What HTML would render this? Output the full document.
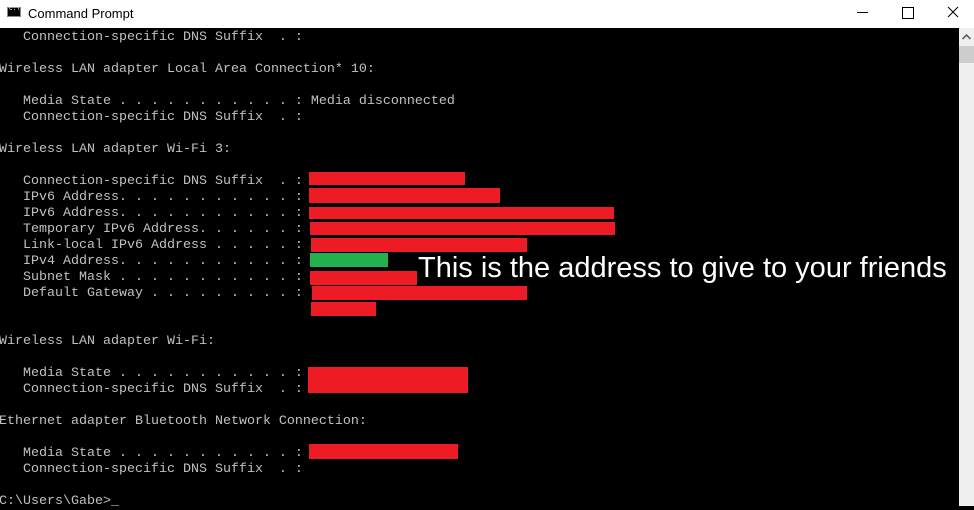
<!DOCTYPE html>
<html><head><style>
body{margin:0;width:974px;height:506px;overflow:hidden;background:#000;position:relative}
.title{position:absolute;left:0;top:0;width:974px;height:28px;background:#fff;font-family:"Liberation Sans",sans-serif;font-size:13px;color:#000}
.con{position:absolute;left:-1px;top:30px;font-family:"Liberation Mono",monospace;font-size:13.33px;line-height:16px;color:#c0c0c0;white-space:pre;margin:0}
.r{position:absolute;background:#ed1c24}
.sb{position:absolute;left:959px;top:28px;width:15px;height:478px;background:#f0f0f0}
</style></head><body>
<div class="title">
<div style="position:absolute;left:7px;top:7px;width:14px;height:10px;background:#000;border:1px solid #888;box-sizing:border-box"><span style="position:absolute;left:1px;top:-3px;font-size:6px;color:#fff;font-family:'Liberation Mono',monospace">c:\</span></div>
<div style="position:absolute;left:28px;top:6px">Command Prompt</div>
<div style="position:absolute;left:857px;top:12px;width:11px;height:1px;background:#000"></div>
<div style="position:absolute;left:902px;top:7px;width:10px;height:10px;border:1px solid #000"></div>
<svg style="position:absolute;left:947px;top:6px" width="12" height="12"><path d="M1 1L11 11M11 1L1 11" stroke="#000" stroke-width="1"/></svg>
</div>
<pre class="con">   Connection-specific DNS Suffix  . :

Wireless LAN adapter Local Area Connection* 10:

   Media State . . . . . . . . . . . : Media disconnected
   Connection-specific DNS Suffix  . :

Wireless LAN adapter Wi-Fi 3:

   Connection-specific DNS Suffix  . :
   IPv6 Address. . . . . . . . . . . :
   IPv6 Address. . . . . . . . . . . :
   Temporary IPv6 Address. . . . . . :
   Link-local IPv6 Address . . . . . :
   IPv4 Address. . . . . . . . . . . :
   Subnet Mask . . . . . . . . . . . :
   Default Gateway . . . . . . . . . :


Wireless LAN adapter Wi-Fi:

   Media State . . . . . . . . . . . :
   Connection-specific DNS Suffix  . :

Ethernet adapter Bluetooth Network Connection:

   Media State . . . . . . . . . . . :
   Connection-specific DNS Suffix  . :

C:\Users\Gabe>_</pre>
<div class="r" style="left:309px;top:172px;width:156px;height:13px"></div>
<div class="r" style="left:309px;top:188px;width:191px;height:15px"></div>
<div class="r" style="left:309px;top:207px;width:305px;height:12px"></div>
<div class="r" style="left:310px;top:222px;width:305px;height:13px"></div>
<div class="r" style="left:311px;top:238px;width:216px;height:14px"></div>
<div class="r" style="left:310px;top:253px;width:78px;height:14px;background:#22b14c"></div>
<div class="r" style="left:310px;top:271px;width:107px;height:14px"></div>
<div class="r" style="left:312px;top:286px;width:215px;height:14px"></div>
<div class="r" style="left:311px;top:302px;width:65px;height:14px"></div>
<div class="r" style="left:308px;top:367px;width:160px;height:26px"></div>
<div class="r" style="left:309px;top:444px;width:149px;height:15px"></div>
<div style="position:absolute;left:418px;top:251px;font-family:'Liberation Sans',sans-serif;font-size:29px;line-height:34px;color:#fff;white-space:nowrap">This is the address to give to your friends</div>
<div class="sb">
<svg style="position:absolute;left:3px;top:6px" width="9" height="6"><path d="M0.5 5L4.5 1L8.5 5" stroke="#606060" stroke-width="1.6" fill="none"/></svg>
<div style="position:absolute;left:0;top:18px;width:15px;height:17px;background:#cdcdcd"></div>
</div>
</body></html>
